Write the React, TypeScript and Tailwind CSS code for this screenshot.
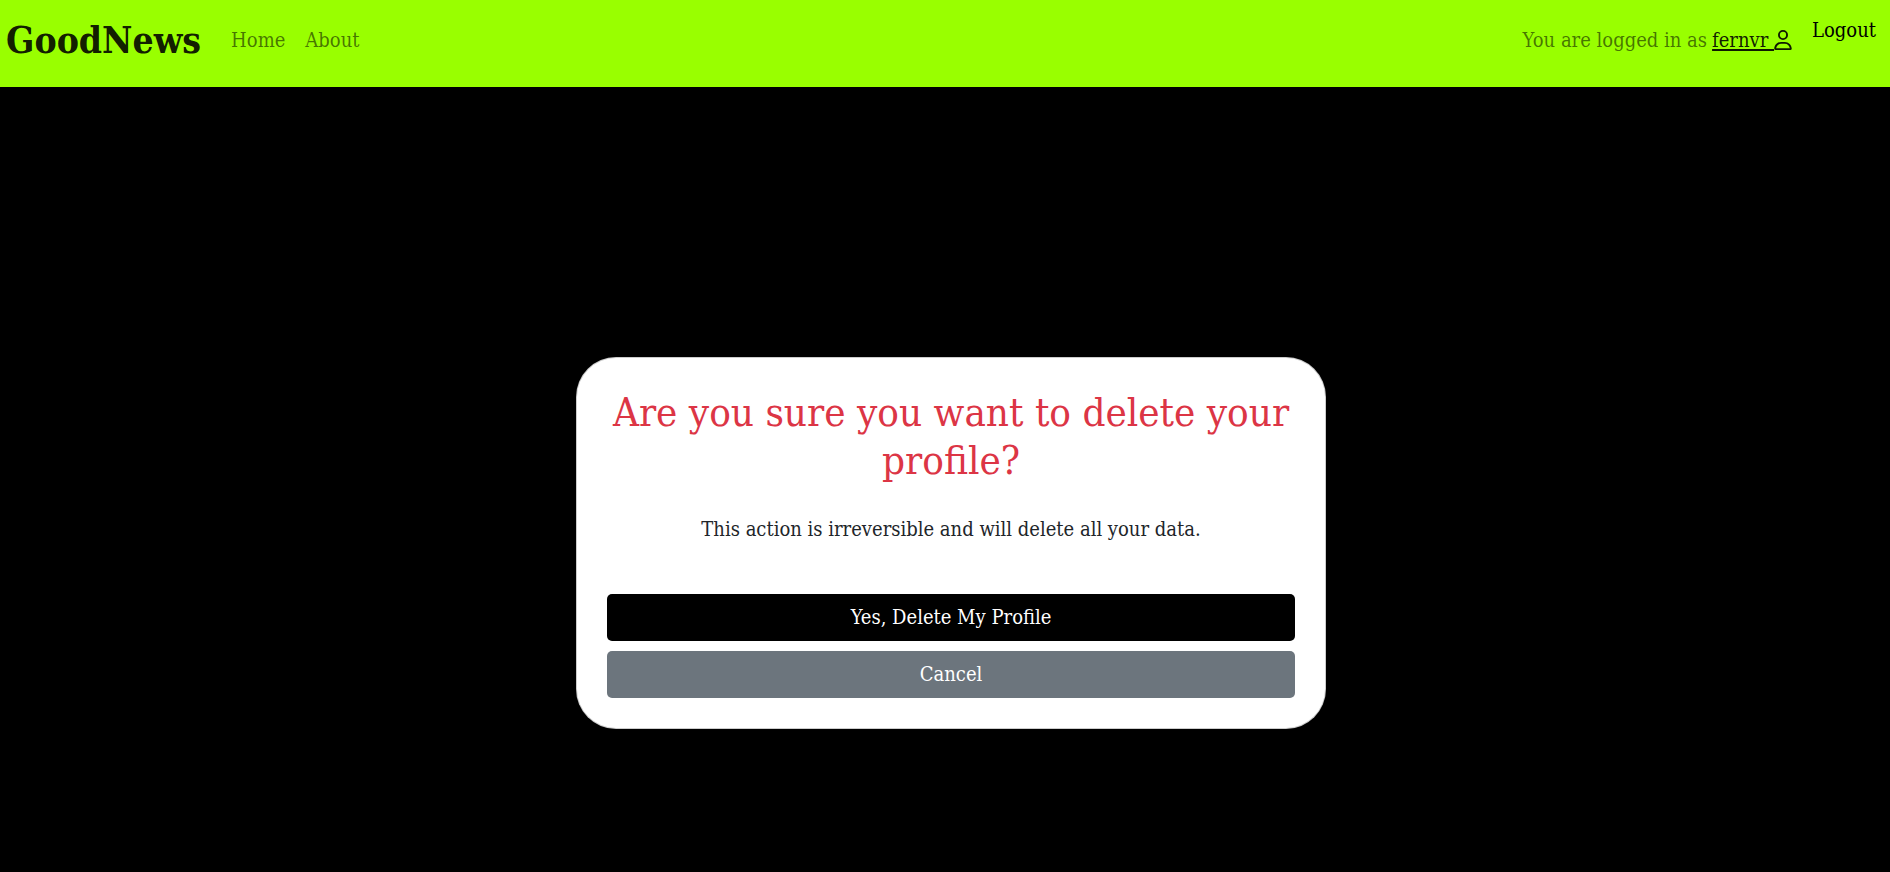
import { FaRegUser } from "react-icons/fa6";

export default function App() {
  return (
    <div className="flex min-h-screen flex-col bg-black font-['DejaVu_Serif_Condensed','DejaVu_Serif',serif] text-[20px] leading-[30px] text-[#212529]">
      <header className="flex h-[87px] items-center justify-between bg-[#99ff00] pr-[14px] pb-[7px] pl-[6px]">
        <nav aria-label="Main" className="flex items-center">
          <a href="#" className="mr-[30px] text-[37px] leading-[48px] font-bold text-black/90">
            GoodNews
          </a>
          <div className="flex gap-5 text-black/55">
            <a href="#home">Home</a>
            <a href="#about">About</a>
          </div>
        </nav>
        <div className="flex items-start gap-5 pb-[10px] whitespace-nowrap">
          <p className="flex gap-[5px] pt-[10px] text-black/55">
            You are logged in as
            <a href="#profile" className="flex items-center text-black/90">
              <span className="whitespace-pre underline decoration-2 underline-offset-2">fernvr </span>
              <FaRegUser aria-hidden="true" className="h-5 w-[18px]" />
            </a>
          </p>
          <a href="#logout" className="text-black">
            Logout
          </a>
        </div>
      </header>
      <main className="flex flex-1 items-center justify-center pt-[126px] pl-3">
        <section className="flex w-full max-w-[750px] flex-col rounded-[40px] border border-black/20 bg-white bg-clip-border p-[30px] text-center">
          <h1 className="text-[40px] leading-[48px] text-[#dc3545]">
            Are you sure you want to delete your profile?
          </h1>
          <p className="mt-[30px] mb-[50px]">
            This action is irreversible and will delete all your data.
          </p>
          <form className="flex flex-col gap-[10px] leading-[47px] text-white">
            <button type="button" className="rounded-[5px] bg-black">
              Yes, Delete My Profile
            </button>
            <button type="button" className="rounded-[5px] bg-[#6c757d]">
              Cancel
            </button>
          </form>
        </section>
      </main>
    </div>
  );
}
